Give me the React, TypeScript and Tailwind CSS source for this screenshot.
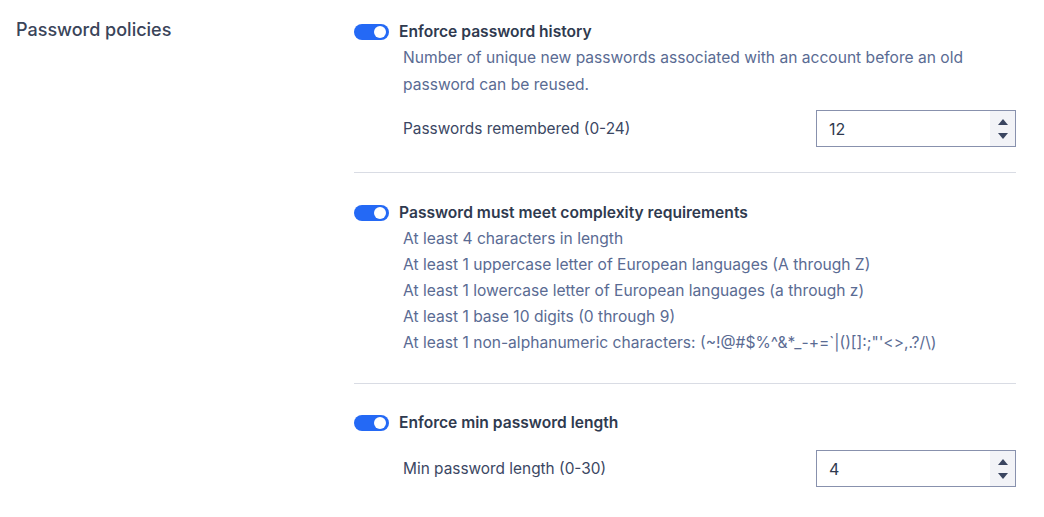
import React from "react";

function Toggle() {
  return (
    <div className="relative w-[35px] h-[16px] rounded-full bg-[#2469f5] shrink-0">
      <div className="absolute right-[3px] top-[2px] w-[12px] h-[12px] rounded-full bg-white" />
    </div>
  );
}

function NumberInput({ value }: { value: string }) {
  return (
    <div className="flex w-[200px] h-[37px] border border-[#8891ad] bg-white">
      <div className="flex-1 flex items-center pl-[12px] text-[16px] text-[#2f3a4f]">{value}</div>
      <div className="w-[25px] bg-[#f2f3f7] flex flex-col items-center justify-center gap-[8px]">
        <svg width="10" height="6" viewBox="0 0 10 6"><path d="M5 0 L10 6 L0 6 Z" fill="#3a4560" /></svg>
        <svg width="10" height="6" viewBox="0 0 10 6"><path d="M0 0 L10 0 L5 6 Z" fill="#3a4560" /></svg>
      </div>
    </div>
  );
}

function Heading({ children }: { children: React.ReactNode }) {
  return (
    <div className="flex items-center h-[24px] gap-[10px]">
      <Toggle />
      <span className="text-[15.6px] font-semibold text-[#2f3a4f]">{children}</span>
    </div>
  );
}

export default function App() {
  return (
    <div
      className="w-[1044px] h-[517px] bg-white flex"
      style={{ fontFamily: "Inter, 'Noto Sans', sans-serif" }}
    >
      <div className="w-[354px] pl-[16px] pt-[18px] shrink-0">
        <div className="text-[18px] font-medium text-[#3a4459] leading-[24px]">Password policies</div>
      </div>
      <div className="w-[662px] pt-[20px]">
        <Heading>Enforce password history</Heading>
        <div className="pl-[49px] text-[15.6px] leading-[27px] text-[#5a6b93]">
          Number of unique new passwords associated with an account before an old
          <br />
          password can be reused.
        </div>
        <div className="mt-[12px] pl-[49px] flex items-center justify-between">
          <span className="text-[15.4px] text-[#3b4763]">Passwords remembered (0-24)</span>
          <NumberInput value="12" />
        </div>
        <div className="mt-[25px] h-px bg-[#d9dce4]" />

        <div className="mt-[28px]">
          <Heading>Password must meet complexity requirements</Heading>
        </div>
        <div className="mt-[1px] pl-[49px] text-[15.6px] leading-[26px] text-[#5a6b93]">
          <div>At least 4 characters in length</div>
          <div>At least 1 uppercase letter of European languages (A through Z)</div>
          <div>At least 1 lowercase letter of European languages (a through z)</div>
          <div>At least 1 base 10 digits (0 through 9)</div>
          <div>At least 1 non-alphanumeric characters: (~!@#$%^&amp;*_-+=`|(){}[]:;"'&lt;&gt;,.?/\)</div>
        </div>
        <div className="mt-[27px] h-px bg-[#d9dce4]" />

        <div className="mt-[27px]">
          <Heading>Enforce min password length</Heading>
        </div>
        <div className="mt-[15px] pl-[49px] flex items-center justify-between">
          <span className="text-[15.4px] text-[#3b4763]">Min password length (0-30)</span>
          <NumberInput value="4" />
        </div>
      </div>
    </div>
  );
}
